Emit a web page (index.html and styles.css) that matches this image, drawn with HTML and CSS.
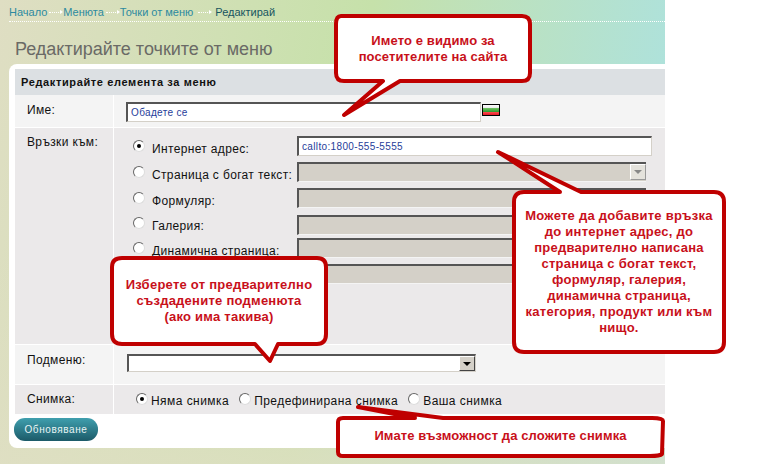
FILE: index.html
```html
<!DOCTYPE html>
<html lang="bg">
<head>
<meta charset="utf-8">
<title>Редактирайте точките от меню</title>
<link rel="stylesheet" href="styles.css">
</head>
<body>
<div class="page">
  <nav class="crumbs">
    <a>Начало</a><span class="sep"></span><a>Менюта</a><span class="sep"></span><a>Точки от меню</a><span class="sep last"></span><b>Редактирай</b>
  </nav>
  <h1 class="title">Редактирайте точките от меню</h1>
  <main class="panel">
    <h2 class="panel-head">Редактирайте елемента за меню</h2>
    <div class="row row-name">
      <div class="label">Име:</div>
      <div class="cell cell-name">
        <div class="field field-name">Обадете се</div>
        <svg class="flag" width="18" height="12" viewBox="0 0 18 12"><defs><linearGradient id="g" x1="0" y1="0" x2="0" y2="1"><stop offset="0" stop-color="#fff"/><stop offset=".33" stop-color="#e8e8e8"/><stop offset=".34" stop-color="#6fc060"/><stop offset=".66" stop-color="#2f9a30"/><stop offset=".67" stop-color="#ff5050"/><stop offset="1" stop-color="#e01020"/></linearGradient></defs><rect x=".5" y=".5" width="17" height="11" fill="url(#g)" stroke="#000"/></svg>
      </div>
    </div>
    <div class="row row-links">
      <div class="label">Връзки към:</div>
      <div class="cell cell-links">
        <div class="link link-a"><span class="radio on"></span><span class="opt">Интернет адрес:</span><div class="field field-url">callto:1800-555-5555</div></div>
        <div class="link link-b"><span class="radio"></span><span class="opt">Страница с богат текст:</span><div class="off"><span class="drop dim"><i></i></span></div></div>
        <div class="link link-c"><span class="radio"></span><span class="opt">Формуляр:</span><div class="off"></div></div>
        <div class="link link-d"><span class="radio"></span><span class="opt">Галерия:</span><div class="off"></div></div>
        <div class="link link-e"><span class="radio"></span><span class="opt">Динамична страница:</span><div class="off"></div></div>
        <div class="link link-f"><span class="radio"></span><div class="off"></div></div>
      </div>
    </div>
    <div class="row row-sub">
      <div class="label">Подменю:</div>
      <div class="cell cell-sub"><div class="select"><span class="drop"><i></i></span></div></div>
    </div>
    <div class="row row-pic">
      <div class="label">Снимка:</div>
      <div class="cell cell-pic">
        <span class="radio on"></span><span class="pic">Няма снимка</span>
        <span class="radio"></span><span class="pic">Предефинирана снимка</span>
        <span class="radio"></span><span class="pic">Ваша снимка</span>
      </div>
    </div>
    <button class="save" type="button">Обновяване</button>
  </main>

  <aside class="note n1">
    <svg width="766" height="464" viewBox="0 0 766 464"><path d="M341 16H522Q530 16 530 24V73Q530 81 522 81H400L344 115L383 81H344Q336 81 336 73V24Q336 16 341 16Z"/></svg>
    <p>Името е видимо за<br>посетителите на сайта</p>
  </aside>
  <aside class="note n2">
    <svg width="766" height="464" viewBox="0 0 766 464"><path d="M524 192H560L498 152L581 192H714Q724 192 724 202V342Q724 352 714 352H524Q514 352 514 342V202Q514 192 524 192Z"/></svg>
    <p>Можете да добавите връзка<br>до интернет адрес, до<br>предварително написана<br>страница с богат текст,<br>формуляр, галерия,<br>динамична страница,<br>категория, продукт или към<br>нищо.</p>
  </aside>
  <aside class="note n3">
    <svg width="766" height="464" viewBox="0 0 766 464"><path d="M122 258H317Q326 258 326 267V334Q326 344 317 344H278L270 361L255 344H122Q112 344 112 334V267Q112 258 122 258Z"/></svg>
    <p>Изберете от предварително<br>създадените подменюта<br>(ако има такива)</p>
  </aside>
  <aside class="note n4">
    <svg width="766" height="464" viewBox="0 0 766 464"><path d="M343 418H415L358 407L443 418H652Q663 418 663 421L662 454Q660 456 650 456H343Q338 456 338 452V422Q338 418 343 418Z"/></svg>
    <p>Имате възможност да сложите снимка</p>
  </aside>
</div>
</body>
</html>
```
FILE: styles.css
```css
* { box-sizing: border-box; }
html, body { margin: 0; padding: 0; background: #fff; overflow: hidden; }
body { font-family: "Liberation Sans", Arial, sans-serif; width: 766px; height: 464px; }
.page {
  position: relative;
  width: 665px;
  height: 464px;
  padding: 0 0 0 9px;
  background:
    linear-gradient(180deg, rgba(224,223,196,0) 55%, rgba(224,223,196,.75) 100%),
    linear-gradient(100deg, #dfdec3 0%, #c6e1aa 50%, #a9e2e6 100%);
}
.crumbs {
  height: 22px;
  padding-top: 3px;
  font-size: 11px;
  line-height: 13px;
  color: #2d8aa0;
  border-bottom: 1px dotted #fff;
  display: flex;
  align-items: center;
}
.crumbs b { font-weight: normal; color: #17555f; }
.sep { position: relative; width: 12px; height: 1px; margin: 0 2px; border-top: 1px dotted #fff; }
.sep::after { content: ""; position: absolute; right: -2px; top: -3px; border: 2px solid transparent; border-left: 3px solid #fff; border-right: 0; }
.sep.last { margin: 0 5px; }
.title {
  margin: 17px 0 0 6px;
  font-size: 18px;
  line-height: 21px;
  font-weight: normal;
  color: #6a6a66;
}
.panel {
  margin-top: 4px;
  height: 384px;
  padding: 5px 0 0 6px;
  background: #fff;
  border-radius: 8px 0 0 8px;
}
.panel-head {
  margin: 0;
  height: 26px;
  padding-left: 6px;
  font-size: 11px;
  line-height: 27px;
  letter-spacing: .63px;
  font-weight: bold;
  color: #111;
  background: #dce0e3;
}
.row { display: flex; border-bottom: 1px solid #fff; }
.label { width: 99px; padding-left: 12px; font-size: 12px; color: #111; letter-spacing: .35px; border-right: 1px solid #fff; flex: none; }
.cell { flex: 1; }
.row-name { height: 33px; background: #f4f4f4; }
.row-name .label { padding-top: 8px; line-height: 14px; }
.cell-name { display: flex; align-items: flex-start; padding: 7px 0 0 12px; }
.row-links { height: 217px; background: #ebe9ea; }
.row-links .label { padding-top: 7px; line-height: 14px; }
.row-sub { height: 40px; background: #f4f4f4; }
.row-sub .label { padding-top: 8px; line-height: 14px; }
.row-pic { height: 29px; background: #ebe9ea; border-bottom: 0; }
.row-pic .label { padding-top: 7px; line-height: 14px; }
.field {
  height: 20px;
  background: #fff;
  border: 1px solid #d4d0c8;
  border-top: 2px solid #555;
  border-left: 2px solid #555;
  font-size: 10px;
  line-height: 17px;
  padding-left: 3px;
  letter-spacing: .35px;
  color: #1f3d9a;
}
.field-name { width: 355px; }
.flag { margin: 2px 0 0 1px; }
.cell-links { padding: 8px 0 0 19px; }
.link { display: flex; align-items: flex-start; font-size: 12px; color: #111; }
.link-a { height: 26px; }
.link-b { height: 26px; }
.link-c { height: 27px; }
.link-d { height: 23px; }
.link-e { height: 26px; }
.link-f { height: 20px; }
.link .radio { margin-top: 4px; }
.link-d .radio { margin-top: 2px; }
.link-f .radio { margin-right: 152px; }
.radio {
  flex: none;
  width: 12px;
  height: 12px;
  border-radius: 50%;
  background: #fff;
  border: 1px solid #666;
  border-right-color: #ddd;
  border-bottom-color: #ddd;
  display: inline-flex;
  align-items: center;
  justify-content: center;
}
.radio.on::after { content: ""; width: 4px; height: 4px; border-radius: 50%; background: #000; }
.opt { width: 152px; padding-left: 7px; margin-top: 6px; line-height: 14px; letter-spacing: .35px; white-space: nowrap; }
.link-d .opt { margin-top: 4px; }
.field-url { width: 355px; }
.off {
  width: 349px;
  height: 20px;
  background: #d4d0c8;
  border-top: 2px solid #555;
  border-left: 2px solid #555;
  border-bottom: 1px solid #f4f4f4;
  display: flex;
  justify-content: flex-end;
}
.drop {
  width: 16px;
  height: 16px;
  background: #d4d0c8;
  border: 1px solid #fff;
  border-right-color: #444;
  border-bottom-color: #444;
  display: flex;
  align-items: center;
  justify-content: center;
}
.drop i { width: 0; height: 0; border: 4px solid transparent; border-top-color: #000; border-bottom: 0; }
.drop.dim { border-right-color: #999; border-bottom-color: #999; background: #e4e2dc; }
.drop.dim i { border-top-color: #888; }
.cell-sub { padding: 9px 0 0 13px; }
.select {
  width: 349px;
  height: 18px;
  background: #fff;
  border: 1px solid #d4d0c8;
  border-top: 2px solid #555;
  border-left: 2px solid #555;
  display: flex;
  justify-content: flex-end;
}
.select .drop { height: 15px; }
.cell-pic { display: flex; align-items: center; padding: 0 0 0 22px; font-size: 12px; color: #111; letter-spacing: .45px; }
.cell-pic .radio { margin-top: -2px; }
.pic { margin: 3px 0 0 3px; padding-right: 10px; }
.save {
  display: block;
  margin: 4px 0 0 -1px;
  width: 84px;
  height: 23px;
  border: 0;
  border-radius: 11px;
  background: linear-gradient(#3f9fae, #1c5a68);
  color: #e8f4f4;
  font: 10px "Liberation Sans", Arial, sans-serif;
  letter-spacing: .6px;
}
.note { position: absolute; left: 0; top: 0; width: 0; height: 0; }
.note svg { position: absolute; left: 0; top: 0; overflow: visible; }
.note path { fill: #fff; stroke: #bf0000; stroke-width: 4; stroke-linejoin: round; }
.note p {
  position: absolute;
  margin: 0;
  font-size: 13px;
  font-weight: bold;
  line-height: 16px;
  text-align: center;
  color: #c8101a;
  letter-spacing: .25px;
  white-space: nowrap;
}
.n1 p { left: 336px; top: 33px; width: 194px; letter-spacing: .12px; }
.n2 p { left: 514px; top: 208px; width: 210px; }
.n3 p { left: 112px; top: 277px; width: 214px; }
.n4 p { left: 338px; top: 428px; width: 325px; letter-spacing: .1px; }
```
